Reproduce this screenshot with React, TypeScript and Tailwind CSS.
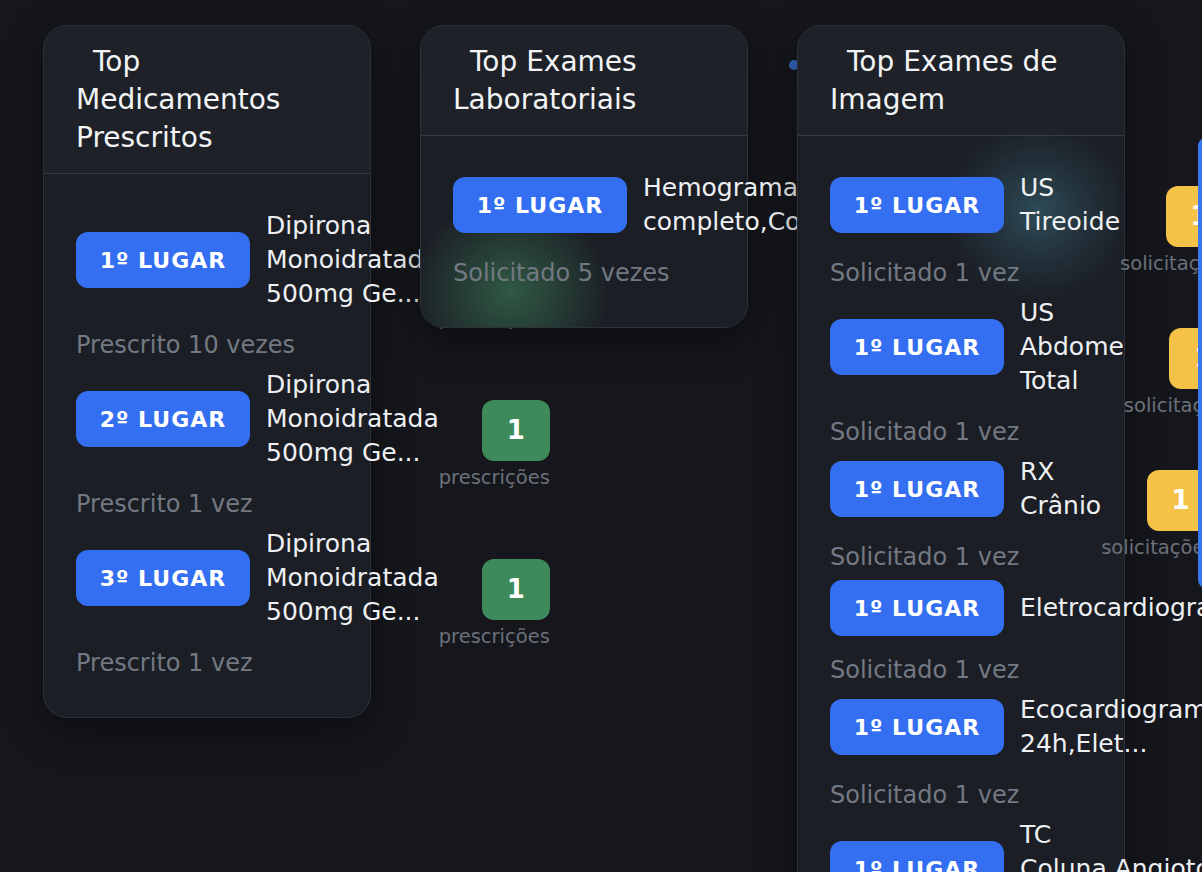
import React from "react";

interface Row {
    rank: string;
    name: string;
    sub: string;
    count: number;
}

interface RankCardProps {
    title: string;
    rows: Row[];
    boxClass: string;
    unit: string;
    layer: string;
    glow?: React.ReactNode;
}

const meds: Row[] = [
    {rank: "1º LUGAR", name: "Dipirona Monoidratada 500mg Ge...", sub: "Prescrito 10 vezes", count: 10},
    {rank: "2º LUGAR", name: "Dipirona Monoidratada 500mg Ge...", sub: "Prescrito 1 vez", count: 1},
    {rank: "3º LUGAR", name: "Dipirona Monoidratada 500mg Ge...", sub: "Prescrito 1 vez", count: 1}
];

const labs: Row[] = [
    {rank: "1º LUGAR", name: "Hemograma completo,Coagulogram...", sub: "Solicitado 5 vezes", count: 5}
];

const images: Row[] = [
    {rank: "1º LUGAR", name: "US Tireoide", sub: "Solicitado 1 vez", count: 1},
    {rank: "1º LUGAR", name: "US Abdome Total", sub: "Solicitado 1 vez", count: 1},
    {rank: "1º LUGAR", name: "RX Crânio", sub: "Solicitado 1 vez", count: 1},
    {rank: "1º LUGAR", name: "Eletrocardiograma", sub: "Solicitado 1 vez", count: 1},
    {rank: "1º LUGAR", name: "Ecocardiograma,Holter 24h,Elet...", sub: "Solicitado 1 vez", count: 1},
    {rank: "1º LUGAR", name: "TC Coluna\u00A0Angiotomografia Tó...", sub: "Solicitado 1 vez", count: 1}
];

const RankCard = ({title, rows, boxClass, unit, layer, glow}: RankCardProps) => (
    <div className={`relative w-[328px] shrink-0 rounded-[24px] border border-[#2c313c] bg-[#1b1e25] shadow-[0_12px_40px_rgba(0,0,0,0.45)] ${layer}`}>
        {/* soft light spot, clipped to the rounded card */}
        <div className="pointer-events-none absolute inset-0 overflow-hidden rounded-[24px]">
            {glow}
        </div>
        <div className="relative rounded-t-[24px] border-b border-[#363b46] bg-[#1f232a]/70 px-8 pt-[17px] pb-4">
            <h2 className="indent-[17px] text-[28px] leading-[38px] font-normal text-[#f3f4f6]">
                {title}
            </h2>
        </div>
        <div className="relative flex flex-col gap-[6px] px-8 pt-[35px] pb-[37px]">
            {rows.map((row, i) => (
                <div key={i} className="flex items-center">
                    <div className="flex flex-col">
                        <div className="flex items-center gap-4">
                            <span className="flex h-[56px] w-[174px] shrink-0 items-center justify-center whitespace-nowrap rounded-[12px] bg-[#336ff0] text-[22px] font-bold tracking-[1px] text-white">
                                {row.rank}
                            </span>
                            <span className="text-[25px] leading-[34px] text-[#eef0f3]">
                                {row.name}
                            </span>
                        </div>
                        <div className="mt-[17px] text-[24px] leading-[34px] text-[#737983]">
                            {row.sub}
                        </div>
                    </div>
                    <div className="flex shrink-0 flex-col items-end">
                        <div className={`flex h-[61px] w-[68px] items-center justify-center rounded-[12px] text-[26px] font-bold text-white ${boxClass}`}>
                            {row.count}
                        </div>
                        <div className="mt-[5px] whitespace-nowrap text-[19.5px] leading-[24px] text-[#6b717b]">
                            {unit}
                        </div>
                    </div>
                </div>
            ))}
        </div>
    </div>
);

export default function App() {
    return (
        <div className="relative h-screen w-full overflow-hidden bg-[#15171c] font-['DejaVu_Sans',sans-serif]">
            <span className="absolute left-[789px] top-[60px] z-0 h-[10px] w-[10px] rounded-full bg-[#3567c0]" />
            <div className="flex items-start gap-[49px] pl-[43px] pt-[25px]">
                <RankCard title="Top Medicamentos Prescritos" rows={meds} boxClass="bg-[#3f8a5a]" unit="prescrições" layer="z-10" />
                <RankCard
                    title="Top Exames Laboratoriais"
                    rows={labs}
                    boxClass="bg-[#42808c]"
                    unit="solicitações"
                    layer="z-20"
                    glow={<div className="absolute left-[-10px] top-[170px] h-[190px] w-[200px] rounded-full bg-[radial-gradient(closest-side,rgba(62,128,88,0.6),rgba(62,128,88,0.28)_55%,rgba(62,128,88,0))]" />}
                />
                <RankCard
                    title="Top Exames de Imagem"
                    rows={images}
                    boxClass="bg-[#f4c246]"
                    unit="solicitações"
                    layer="z-30"
                    glow={<div className="absolute left-[145px] top-[95px] h-[180px] w-[190px] rounded-full bg-[radial-gradient(closest-side,rgba(60,112,128,0.55),rgba(60,112,128,0.22)_55%,rgba(60,112,128,0))]" />}
                />
            </div>
            <div className="absolute left-[1198px] top-[138px] z-40 h-[450px] w-[24px] rounded-[8px] bg-[#3a78f0]" />
        </div>
    );
}
